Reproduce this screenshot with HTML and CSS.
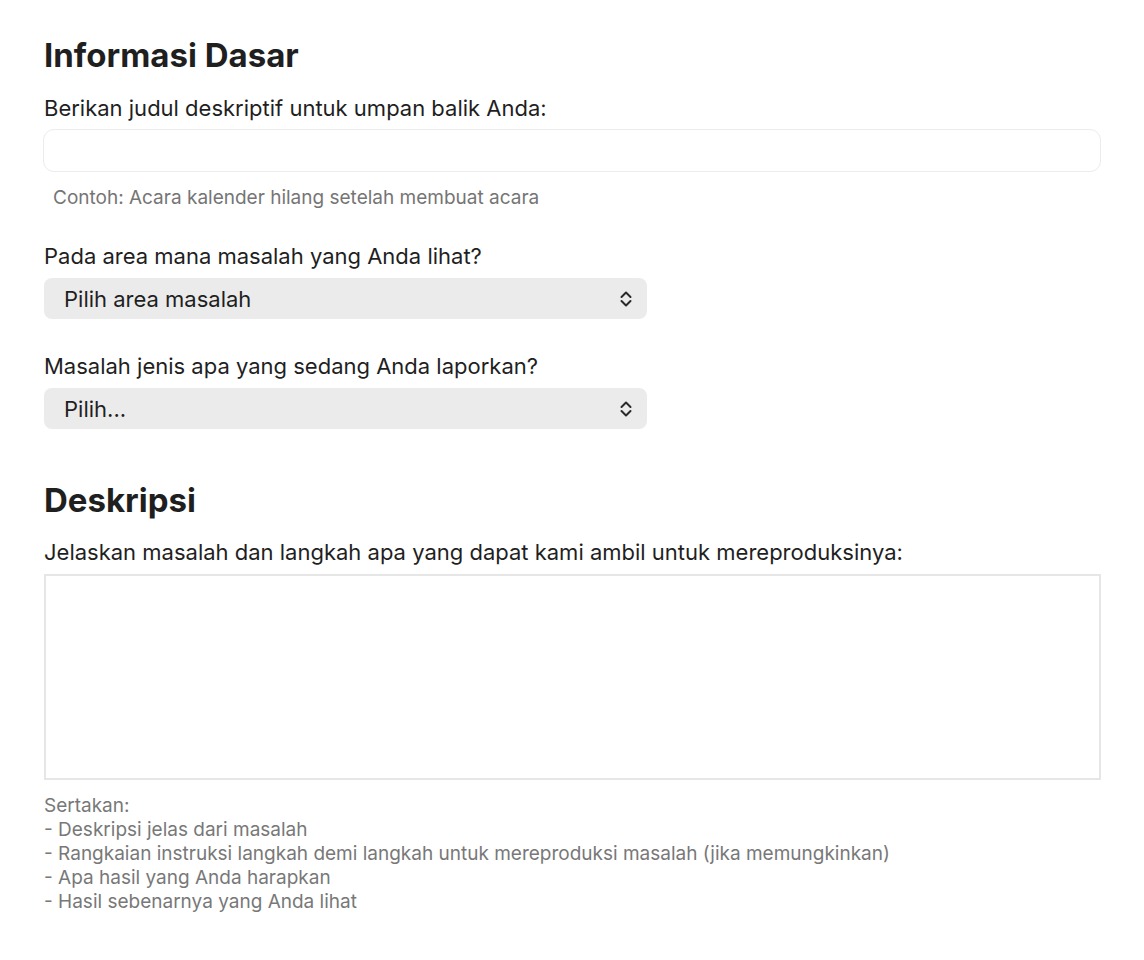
FILE: index.html
```html
<!DOCTYPE html>
<html lang="id">
<head>
<meta charset="utf-8">
<title>Umpan Balik</title>
<link rel="stylesheet" href="styles.css">
</head>
<body>
<div class="page">
  <h2 class="section-title">Informasi Dasar</h2>
  <label class="field-label label-first">Berikan judul deskriptif untuk umpan balik Anda:</label>
  <div class="text-input"></div>
  <div class="hint">Contoh: Acara kalender hilang setelah membuat acara</div>

  <label class="field-label label-gap">Pada area mana masalah yang Anda lihat?</label>
  <div class="select">
    <span>Pilih area masalah</span>
    <svg class="chev" width="16" height="20" viewBox="0 0 16 20"><path d="M3.5 8 L8 3.5 L12.5 8 M3.5 12 L8 16.5 L12.5 12" fill="none" stroke="#2a2a2a" stroke-width="2" stroke-linecap="round" stroke-linejoin="round"/></svg>
  </div>

  <label class="field-label label-gap">Masalah jenis apa yang sedang Anda laporkan?</label>
  <div class="select">
    <span>Pilih...</span>
    <svg class="chev" width="16" height="20" viewBox="0 0 16 20"><path d="M3.5 8 L8 3.5 L12.5 8 M3.5 12 L8 16.5 L12.5 12" fill="none" stroke="#2a2a2a" stroke-width="2" stroke-linecap="round" stroke-linejoin="round"/></svg>
  </div>

  <h2 class="section-title section-second">Deskripsi</h2>
  <label class="field-label label-first">Jelaskan masalah dan langkah apa yang dapat kami ambil untuk mereproduksinya:</label>
  <div class="textarea"></div>
  <div class="help">Sertakan:<br>- Deskripsi jelas dari masalah<br>- Rangkaian instruksi langkah demi langkah untuk mereproduksi masalah (jika memungkinkan)<br>- Apa hasil yang Anda harapkan<br>- Hasil sebenarnya yang Anda lihat</div>
</div>
</body>
</html>
```

FILE: styles.css
```css
html, body {
  margin: 0;
  padding: 0;
  background: #ffffff;
}
body {
  font-family: Inter, "Liberation Sans", Arial, sans-serif;
  color: #1f1f1f;
}
.page {
  display: flex;
  flex-direction: column;
  align-items: flex-start;
  padding: 35px 0 0 44px;
  width: 1058px;
}
.section-title {
  margin: 0;
  font-size: 33px;
  line-height: 40px;
  font-weight: 700;
  color: #1f1f1f;
}
.section-second {
  margin-top: 51px;
}
.field-label {
  display: block;
  font-size: 22px;
  line-height: 28px;
  color: #1f1f1f;
}
.label-first {
  margin-top: 19px;
}
.section-second + .label-first {
  margin-top: 18px;
}
.label-gap {
  margin-top: 32px;
}
.select + .label-gap {
  margin-top: 33px;
}
.text-input {
  margin-top: 7px;
  margin-left: -1px;
  box-sizing: border-box;
  width: 1058px;
  height: 43px;
  border: 1px solid #ececec;
  border-radius: 11px;
  background: #fff;
}
.hint {
  margin-top: 14px;
  padding-left: 9px;
  font-size: 19px;
  line-height: 24px;
  color: #757575;
}
.select {
  margin-top: 8px;
  box-sizing: border-box;
  width: 603px;
  height: 41px;
  border-radius: 8px;
  background: #ebebeb;
  display: flex;
  align-items: center;
  justify-content: space-between;
  padding: 0 13px 0 20px;
  font-size: 22px;
  color: #1f1f1f;
}
.chev {
  display: block;
}
.textarea {
  margin-top: 8px;
  box-sizing: border-box;
  width: 1057px;
  height: 206px;
  border: 2px solid #e6e6e6;
  background: #fff;
}
.help {
  margin-top: 14px;
  font-size: 19px;
  line-height: 24px;
  color: #787878;
}
```
